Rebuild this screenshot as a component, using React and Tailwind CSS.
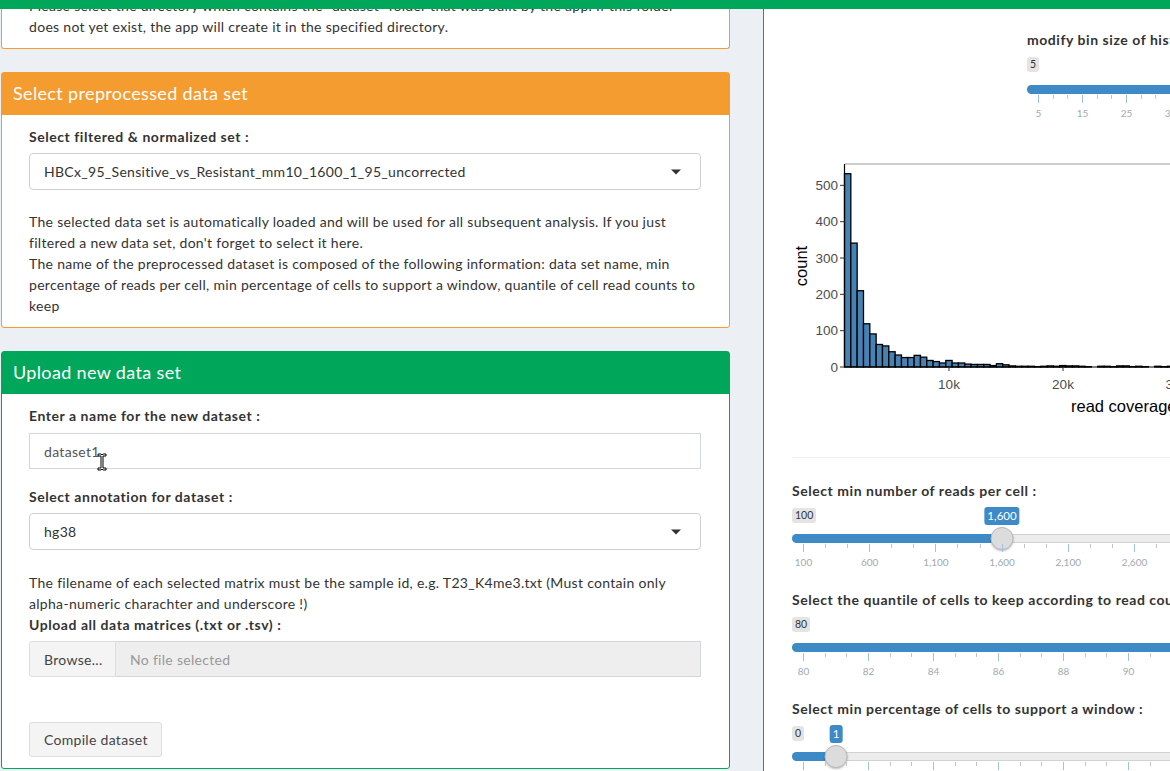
import React from 'react';

const BLUE = '#3e8ac6';

function Caret() {
  return <span className="absolute right-[19px] top-1/2 -translate-y-1/2 w-0 h-0 border-l-[5px] border-r-[5px] border-t-[5px] border-l-transparent border-r-transparent border-t-[#333]" />;
}

function Slider({ label, minLabel, valueLabel, handleX, full, start, spacing, labels, delta = 0, className = '' }) {
  const width = 900;
  const majors = labels.map((l, i) => start + i * spacing);
  const minors = [];
  majors.forEach((x) => {
    minors.push(x + spacing / 3);
    minors.push(x + (2 * spacing) / 3);
  });
  return (
    <div className={className}>
      <div className="font-bold leading-[20px] whitespace-nowrap text-[#333] tracking-[0.55px]">{label}</div>
      <div className="relative h-[69px] w-[900px] tracking-normal">
        <span className="absolute left-0 top-[7px] h-[15px] px-[3px] rounded-[3px] bg-[#e4e4e4] text-[10.5px] leading-[15px] text-[#333]">{minLabel}</span>
        {valueLabel && (
          <span
            className="absolute top-[6px] h-[18px] px-[3px] rounded-[3px] text-white text-[11.5px] leading-[18px] -translate-x-1/2"
            style={{ left: handleX, backgroundColor: BLUE }}
          >
            {valueLabel}
          </span>
        )}
        <div className="absolute left-0 h-[9px] rounded-full bg-[#ececec] border border-[#d2d2d2]" style={{ top: 33 + delta, width }} />
        <div
          className="absolute left-0 h-[9px] rounded-l-full"
          style={{ top: 33 + delta, width: full ? width : handleX, backgroundColor: BLUE }}
        />
        {!full && (
          <div
            className="absolute w-[23px] h-[23px] rounded-full bg-[#dcdcdc] border border-[#b9b9b9] shadow-[0_1px_2px_rgba(0,0,0,0.25)] -translate-x-1/2"
            style={{ left: handleX, top: 26 + delta }}
          />
        )}
        {majors.map((x) => (
          <span key={'M' + x} className="absolute w-px h-[8px] bg-[#9fc3e2]" style={{ left: x, top: 43 + delta }} />
        ))}
        {minors.map((x) => (
          <span key={'m' + x} className="absolute w-px h-[4px] bg-[#c4c4c4]" style={{ left: Math.round(x), top: 43 + delta }} />
        ))}
        {labels.map((l, i) => (
          <span
            key={'L' + i}
            className="absolute text-[10px] leading-[12px] text-[#a2a9b1] -translate-x-1/2 whitespace-nowrap"
            style={{ left: majors[i] + 0.5, top: 55 + delta }}
          >
            {l}
          </span>
        ))}
      </div>
    </div>
  );
}

const counts = [532, 341, 210, 119, 91, 62, 58, 42, 33, 26, 26, 32, 27, 18, 15, 11, 18, 11, 11, 8, 7, 7, 7, 4, 9, 6, 3, 2, 2, 2, 1, 2, 3, 2, 4, 3, 3, 2, 1, 0, 2, 2, 1, 3, 3, 1, 2, 1, 0, 2, 1, 2, 1, 1];

function Histogram() {
  const ox = 80.5;
  const y0 = 217;
  const k = 0.3633;
  const bw = 6.33;
  return (
    <svg width="420" height="270" className="block -ml-[28px] mt-[31px] tracking-normal" style={{ fontFamily: '"Liberation Sans", Arial, sans-serif' }}>
      <line x1={ox} y1="14" x2="420" y2="14" stroke="#9a9a9a" strokeWidth="1" />
      {counts.map((c, i) => (
        <rect
          key={i}
          x={ox + i * bw}
          y={y0 - c * k}
          width={bw}
          height={Math.max(c * k, 0)}
          fill="#4682b4"
          stroke="#000"
          strokeWidth="1.3"
        />
      ))}
      <line x1={ox} y1="14" x2={ox} y2={y0 + 0.5} stroke="#000" strokeWidth="1.2" />
      <line x1={ox} y1={y0} x2="420" y2={y0} stroke="#000" strokeWidth="1.2" />
      {[0, 100, 200, 300, 400, 500].map((v) => {
        const y = y0 - v * k;
        return (
          <g key={v}>
            <line x1={ox - 4.5} y1={y} x2={ox} y2={y} stroke="#333" strokeWidth="1" />
            <text x="74" y={y} textAnchor="end" dominantBaseline="central" fontSize="13.5" fill="#4d4d4d">
              {v}
            </text>
          </g>
        );
      })}
      {[
        ['10k', 185],
        ['20k', 299],
        ['30k', 412.5],
      ].map(([t, x]) => (
        <g key={t}>
          <line x1={x} y1={y0} x2={x} y2={y0 + 4} stroke="#333" strokeWidth="1" />
          <text x={x} y="234" textAnchor="middle" dominantBaseline="central" fontSize="13.5" fill="#4d4d4d">
            {t}
          </text>
        </g>
      ))}
      <text x="307" y="256" dominantBaseline="central" fontSize="16.5" fill="#000">
        read coverage
      </text>
      <text x="37" y="116" textAnchor="middle" dominantBaseline="central" fontSize="16.5" fill="#000" transform="rotate(-90 37 116)">
        count
      </text>
    </svg>
  );
}

function IBeam() {
  return (
    <svg width="10" height="18" viewBox="0 0 10 18" className="absolute left-[95px] top-[101px]">
      <path d="M1 1 H4 L5 2 L6 1 H9 V3 H6 V15 H9 V17 H6 L5 16 L4 17 H1 V15 H4 V3 H1 Z" fill="#fff" stroke="#000" strokeWidth="1" />
    </svg>
  );
}

export default function App() {
  const labelCls = 'font-bold leading-[20px] text-[#333] tracking-[0.55px]';
  const ORANGE = 'border-[#f49c2f]';
  return (
    <div className="relative w-[1170px] h-[771px] overflow-hidden bg-[#ecf0f5] text-[14px] text-[#333] tracking-[0.3px] font-['Lato','Noto_Sans',sans-serif]">
      <div className="flex h-full">
        {/* Left column */}
        <div className="w-[763px] shrink-0 pl-[1px] flex flex-col">
          {/* Box 1 (scrolled) */}
          <div className={'w-[729px] -mt-[5px] bg-white border border-t-0 rounded-b-[3px] pl-[27px] pr-[28px] pb-[11px] leading-[21px] whitespace-nowrap ' + ORANGE}>
            <div>Please select the directory which contains the "dataset" folder that was built by the app. If this folder</div>
            <div>does not yet exist, the app will create it in the specified directory.</div>
          </div>

          {/* Box 2 */}
          <div className={'w-[729px] mt-[23px] bg-white border rounded-[3px] ' + ORANGE}>
            <div className="h-[42px] bg-[#f49c2f] flex items-center pl-[11px] pb-[2px] text-white text-[18px] tracking-[0.35px]">Select preprocessed data set</div>
            <div className="pl-[27px] pr-[28px] pt-[12px] pb-[11px]">
              <div className={labelCls}>Select filtered &amp; normalized set :</div>
              <div className="relative mt-[6px] h-[37px] border border-[#cfcfcf] rounded-[4px] flex items-center pl-[14px] text-[#333]">
                HBCx_95_Sensitive_vs_Resistant_mm10_1600_1_95_uncorrected
                <Caret />
              </div>
              <div className="mt-[21px] leading-[21px] whitespace-nowrap">
                <div>The selected data set is automatically loaded and will be used for all subsequent analysis. If you just</div>
                <div>filtered a new data set, don't forget to select it here.</div>
                <div>The name of the preprocessed dataset is composed of the following information: data set name, min</div>
                <div>percentage of reads per cell, min percentage of cells to support a window, quantile of cell read counts to</div>
                <div>keep</div>
              </div>
            </div>
          </div>

          {/* Box 3 */}
          <div className="relative w-[729px] mt-[23px] bg-white border border-[#00a65a] rounded-[3px]">
            <div className="h-[42px] bg-[#00a65a] flex items-center pl-[11px] pb-[2px] text-white text-[18px] tracking-[0.35px]">Upload new data set</div>
            <div className="pl-[27px] pr-[28px] pt-[12px] pb-[11px]">
              <div className={labelCls}>Enter a name for the new dataset :</div>
              <div className="mt-[7px] h-[36px] border border-[#d2d6de] flex items-center pl-[14px] text-[#555]">dataset1</div>
              <div className={labelCls + ' mt-[18px]'}>Select annotation for dataset :</div>
              <div className="relative mt-[6px] h-[37px] border border-[#cfcfcf] rounded-[4px] flex items-center pl-[14px] text-[#333]">
                hg38
                <Caret />
              </div>
              <div className="mt-[22px] leading-[21px] whitespace-nowrap">
                <div>The filename of each selected matrix must be the sample id, e.g. T23_K4me3.txt (Must contain only</div>
                <div>alpha-numeric charachter and underscore !)</div>
                <div className="font-bold tracking-[0.55px]">Upload all data matrices (.txt or .tsv) :</div>
              </div>
              <div className="mt-[6px] h-[36px] flex">
                <div className="w-[87px] h-full bg-[#f4f4f4] border border-[#ddd] rounded-l-[3px] flex items-center pl-[14px] text-[#444]">Browse...</div>
                <div className="flex-1 h-full bg-[#eee] border border-l-0 border-[#d2d6de] flex items-center pl-[14px] text-[#999]">No file selected</div>
              </div>
              <div className="mt-[45px] w-[133px] h-[35px] bg-[#f4f4f4] border border-[#ddd] rounded-[3px] flex items-center pl-[14px] text-[#444]">Compile dataset</div>
            </div>
            <IBeam />
          </div>
        </div>

        {/* Right column */}
        <div className="flex-1 min-w-0 bg-white border-l border-[#00a65a] overflow-hidden">
          <div className="w-[900px] pl-[28px] flex flex-col">
            <Slider
              className="ml-[235px] mt-[30px]"
              label="modify bin size of histogram :"
              minLabel="5"
              full
              start={11}
              spacing={44}
              labels={['5', '15', '25', '35', '45', '55']}
              delta={2}
            />
            <Histogram />
            <div className="mt-[37px] h-px bg-[#eee]" />
            <Slider
              className="mt-[23px]"
              label="Select min number of reads per cell :"
              minLabel="100"
              valueLabel="1,600"
              handleX={210}
              start={11}
              spacing={66.2}
              labels={['100', '600', '1,100', '1,600', '2,100', '2,600', '3,100', '3,600']}
            />
            <Slider
              className="mt-[20px]"
              label="Select the quantile of cells to keep according to read counts :"
              minLabel="80"
              full
              start={11}
              spacing={65}
              labels={['80', '82', '84', '86', '88', '90', '92', '94']}
            />
            <Slider
              className="mt-[20px]"
              label="Select min percentage of cells to support a window :"
              minLabel="0"
              valueLabel="1"
              handleX={44}
              start={11}
              spacing={65}
              labels={['0', '2', '4', '6', '8', '10', '12', '14']}
            />
          </div>
        </div>
      </div>

      {/* top bar */}
      <div className="absolute top-0 left-0 right-0 h-[9px] bg-[#00a65a]" />
    </div>
  );
}
